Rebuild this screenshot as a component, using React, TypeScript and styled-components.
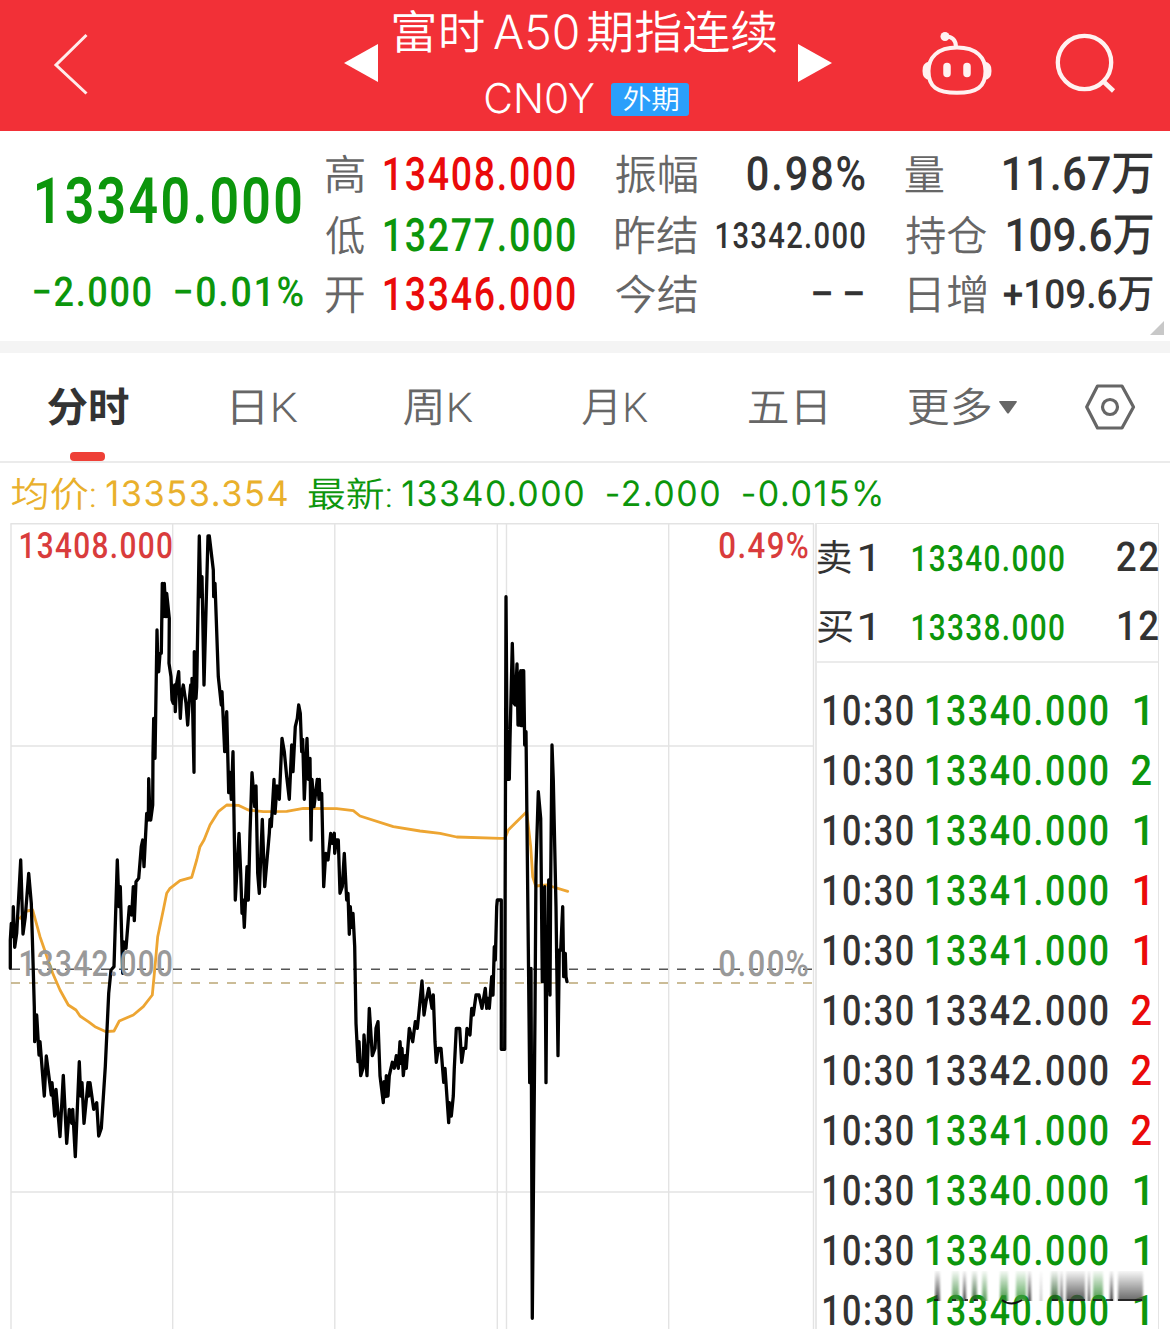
import React, { useLayoutEffect, useRef, useState } from "react";
import styled, { createGlobalStyle } from "styled-components";

const GREEN = "#0c960c";
const RED = "#ea0a0a";
const INK = "#333333";
const GREY = "#666666";
const NUMERIC = 'Roboto, "Noto Sans CJK SC", sans-serif';
const PLAIN = 'Inter, "Noto Sans CJK SC", sans-serif';

const GlobalStyle = createGlobalStyle`
  *, *::before, *::after { box-sizing: border-box; }
  body { margin: 0; background: #ffffff; }
`;

/* ---------- text fitted to a fixed width ---------- */

interface TextStyle {
  size: number;
  color?: string;
  weight?: number;
  plain?: boolean;
  drop?: number;
}

const FitBox = styled.span<{ $w: number; $size: number }>`
  display: block;
  flex: none;
  width: ${(p) => p.$w}px;
  height: ${(p) => p.$size}px;
`;

const FitText = styled.span<{ $size: number; $color: string; $weight: number; $plain: boolean; $track: number }>`
  display: inline-block;
  white-space: nowrap;
  transform-origin: 0 50%;
  text-rendering: geometricPrecision;
  font-family: ${(p) => (p.$plain ? PLAIN : NUMERIC)};
  font-size: ${(p) => p.$size}px;
  font-weight: ${(p) => p.$weight};
  letter-spacing: ${(p) => p.$track}px;
  line-height: ${(p) => p.$size}px;
  color: ${(p) => p.$color};
`;

function Fit({ w, size, color = INK, weight = 500, plain = false, drop = 0, children }: TextStyle & { w: number; children: string }) {
  const ref = useRef<HTMLSpanElement>(null);
  const [transform, setTransform] = useState("none");
  const track = /^[-−+\d.:%]+$/.test(children) ? size * 0.045 : 0;
  useLayoutEffect(() => {
    const ctx = document.createElement("canvas").getContext("2d");
    if (!ref.current || !ctx) return;
    const cs = getComputedStyle(ref.current);
    const zoom = 8;
    ctx.font = `${cs.fontWeight} ${size * zoom}px ${cs.fontFamily}`;
    const m = ctx.measureText(children);
    const left = m.actualBoundingBoxLeft / zoom;
    const ink = left + m.actualBoundingBoxRight / zoom + track * (children.length - 1);
    const k = w / ink;
    setTransform(`translate(${left * k + 0.8}px, ${drop}px) scaleX(${k})`);
  }, [w, size, weight, children, track, drop]);
  return (
    <FitBox $w={w} $size={size}>
      <FitText ref={ref} $size={size} $color={color} $weight={weight} $plain={plain} $track={track} style={{ transform }}>
        {children}
      </FitText>
    </FitBox>
  );
}

/* ---------- page ---------- */

const Page = styled.div`
  width: 1170px;
  height: 1329px;
  overflow: hidden;
  display: flex;
  flex-direction: column;
  background: #ffffff;
`;

const Header = styled.header`
  flex: none;
  height: 131px;
  display: grid;
  grid-template-columns: 344px 34px 420px 34px 89px 71px 178px;
  align-items: start;
  background: #f23037;
`;

const IconSlot = styled.div<{ $top: number; $left?: number }>`
  padding-top: ${(p) => p.$top}px;
  padding-left: ${(p) => p.$left ?? 0}px;
  svg { display: block; }
`;

const Titles = styled.div`
  display: flex;
  flex-direction: column;
  padding: 10px 0 0 15px;
`;

const TitleLine = styled.div`
  display: flex;
  align-items: center;
  gap: 10px;
  height: 47px;
`;

const CodeLine = styled.div`
  display: flex;
  align-items: center;
  gap: 18px;
  height: 34px;
  margin: 25px 0 0 92px;
`;

const Tag = styled.span`
  display: flex;
  align-items: center;
  justify-content: center;
  width: 78px;
  height: 33px;
  border-radius: 3px;
  background: #2b9ffb;
`;

const Quote = styled.section`
  flex: none;
  position: relative;
  height: 210px;
  display: grid;
  grid-template-columns: 325px 290px 290px 265px;
`;

const Headline = styled.div`
  padding: 39px 0 0 36px;
`;

const ChangeRow = styled.div`
  display: flex;
  gap: 24px;
  margin: 39px 0 0 -3px;
`;

const StatColumn = styled.div`
  display: grid;
  grid-template-rows: 61px 61px 58px;
  padding-top: 13px;
`;

const Stat = styled.div<{ $width: number; $indent?: number }>`
  display: flex;
  align-items: center;
  justify-content: space-between;
  width: ${(p) => p.$width}px;
  padding-left: ${(p) => p.$indent ?? 0}px;
`;

const Corner = styled.svg`
  position: absolute;
  right: 6px;
  bottom: 6px;
`;

const Band = styled.div`
  flex: none;
  height: 12px;
  background: #f4f4f4;
`;

const Tabs = styled.nav`
  flex: none;
  height: 110px;
  display: grid;
  grid-template-columns: 185px 171px 178px 167px 160px 177px 85px;
  padding-left: 47px;
  border-bottom: 2px solid #ebebeb;
`;

const Tab = styled.div`
  position: relative;
  display: flex;
  align-items: center;
  gap: 9px;
`;

const ActiveMark = styled.span`
  position: absolute;
  left: 23px;
  bottom: 0;
  width: 35px;
  height: 9px;
  border-radius: 4px;
  background: #ee4037;
`;

const Summary = styled.div`
  flex: none;
  height: 60px;
  display: flex;
  align-items: center;
  gap: 11px;
  padding: 2px 0 0 11px;
`;

const SummaryGroup = styled.div<{ $before?: number }>`
  display: flex;
  align-items: center;
  gap: 12px;
  margin-left: ${(p) => p.$before ?? 0}px;
`;

const Body = styled.main`
  flex: none;
  height: 806px;
  display: grid;
  grid-template-columns: 815px 344px;
`;

const ChartArea = styled.div`
  position: relative;
  svg { display: block; }
`;

const ChartLabel = styled.div<{ $x: number; $y: number }>`
  position: absolute;
  left: ${(p) => p.$x}px;
  top: ${(p) => p.$y}px;
`;

const Book = styled.aside`
  position: relative;
  border: 1px solid #e4e4e4;
  border-bottom: 0;
  border-left: 2px solid #e8e8e8;
  height: 806px;
`;

const Orders = styled.div`
  height: 139px;
  border-bottom: 2px solid #ebebeb;
`;

const Order = styled.div`
  display: grid;
  grid-template-columns: 42px 53px 1fr auto;
  align-items: center;
  height: 69px;
  padding-right: 1px;
`;

const Ticks = styled.div`
  padding-top: 19px;
`;

const Tick = styled.div<{ $end: number }>`
  height: 60px;
  display: grid;
  grid-template-columns: 103px 1fr auto;
  align-items: center;
  padding: 0 ${(p) => p.$end}px 0 6px;
`;

const Smear = styled.svg`
  position: absolute;
  left: 117px;
  top: 747px;
`;

/* ---------- chart data ---------- */

type Section = [number, number, number[]];

const price: Section[] = [
  [0, 840, [31,385,31,300,34,250,38,290,40,200,44,322,50,280,62,60,69,282,76,230,86,100,94,190,98,330,103,500,104,605,110,525,117,645,120,605,133,768,139,648,154,765,156,728,164,828,168,748,180,890,190,706,200,910,208,808,215,850,218,808,226,950,238,665,242,768,246,728,252,850,264,728,266,768,270,728,281,808,290,788,296,888,304,865,316,680,326,460,333,390,342,380,352,60,357,200,361,140,368,400,370,305,378,325,388,200,395,225,400,140,403,242,408,125,416,115,424,20]],
  [0, 520, [428,960,432,1040,440,880,445,900,446,776,450,895,452,900,458,855,459,700,461,595,465,715,471,330,474,450,476,455,480,400,484,400,487,190,490,290,493,190,498,290,500,220,508,295,507,430,513,470,516,540,520,550,524,495,526,575,530,490,536,455,541,595,545,520,550,495,558,550,563,615,568,540,572,495,576,540,576,475,582,757,583,395,588,535,590,500,598,48,602,230,606,170,612,495,624,48,628,48,640,150,641,230,645,190,655,470,664,555,666,515,674,695,680,575,686,818,690,757,694,838,699,695]],
  [220, 680, [46,660,57,460,62,580,66,700,69,660,73,742,81,560,85,660,90,460,96,278,104,380,108,318,113,580,118,640,127,418,134,620,148,460,150,418,154,440,162,298,165,400,171,318,178,358,186,175,193,215,200,290,208,358,215,195,219,275,226,140,232,115,236,75,241,100,245,215,248,178,253,358,261,175,265,298,270,235,273,480,276,298,282,380,292,298,297,358,298,298,299,340,305,340,311,620,317,520,324,540,332,460,336,490,343,460,344,520,349,480,355,480,360,640,367,620,373,520,380,660,384,640,388,763,391,680,395,742,399,700,404,800,408,1030,414,1145,417,1085,422,1187,429,1165,432,1065,441,1187,448,985,457,1127,465,1105,468,1045,474,1025,480,1187,490,1268,492,1205,497,1250,499,1187,504,1248,508,1187,517,1147,523,1165,529,1127,535,1165,540,1085,544,1150,546,1105,550,1187,556,1127,559,1165,568,1045,578,1085,586,1025,592,1045,596,1005,606,903,612,1005,618,965,626,925,636,985,640,945,645,1085,649,1147,655,1105,663,1105,671,1207,675,1165,686,1328,688,1268,694,1308,700,1248,703,1165,709,1045,719,1045,725,1147,731,1105,737,1105,741,1045,750,1065,755,985,760,1005,768,945,777,945,786,985,796,925,800,985,804,955,808,985,815,890,819,945,823,800,826,840,830,680]],
  [480, 580, [52,960,64,960,64,1408,74,1408,78,50,82,598,88,598,90,480,97,190,102,370,106,375,111,252,114,435,117,280,119,435,122,272,124,437,127,272,129,437,131,272,134,495,138,455,145,1100,149,1508,153,1165,157,2215,165,1300,168,860,175,635,182,715,187,1205,189,930,191,1205,194,920,198,1508,201,1040,203,1230,206,900,210,1245,212,900,216,495,220,600,228,980,234,1427,238,1110,242,1110,248,980,251,1190,256,1120,258,1190,261,1205]],
];

const average: Section[] = [
  [0, 840, [60,235,80,213,98,210,120,290,158,400,180,450,205,495,228,510,240,528,265,545,285,560,318,575,342,573,358,543,400,525,430,500,457,465,465,380,473,290,490,210,500,160,510,145,540,122,575,112,590,60,600,20]],
  [0, 520, [612,960,630,915,655,875,680,855,715,856,745,870]],
  [220, 680, [130,395,200,394,250,385,350,386,400,392,420,408,520,440,600,453,660,460,710,471,840,475]],
  [480, 580, [75,775,85,750,140,695,152,800,158,890,167,918,200,915,263,934]],
];

/* Each section stores thirds of a pixel from its own origin. */
const toPoints = (sections: Section[]) =>
  sections
    .flatMap(([ox, oy, v]) => {
      const out: string[] = [];
      for (let i = 0; i < v.length; i += 2) out.push(`${(ox + v[i] / 3).toFixed(1)},${(oy + v[i + 1] / 3).toFixed(1)}`);
      return out;
    })
    .join(" ");

function Chart() {
  return (
    <ChartArea>
      <svg width="815" height="806" viewBox="0 523 815 806">
        <g stroke="#e3e3e3" strokeWidth="1.4" fill="none">
          <path d="M10.500 523.700H814M11 746H814M11 1192H814" />
          <path d="M11 523.500V1329M172.700 523.500V1329M334.800 523.500V1329M497.300 523.500V1329M506.500 523.500V1329M668.700 523.500V1329M813.500 523.500V1329" />
        </g>
        <path d="M11 969.200H812" stroke="#555" strokeWidth="1.400" strokeDasharray="9 9" />
        <path d="M11 983H812" stroke="#bba775" strokeWidth="1.400" strokeDasharray="9 9" />
        <polyline points={toPoints(average)} fill="none" stroke="#eda532" strokeWidth="2.8" strokeLinejoin="round" strokeLinecap="round" />
        <polyline points={toPoints(price)} fill="none" stroke="#000" strokeWidth="3.3" strokeLinejoin="round" strokeLinecap="round" />
      </svg>
      <ChartLabel $x={20} $y={5}><Fit w={151} size={36} color="#d93c3c">13408.000</Fit></ChartLabel>
      <ChartLabel $x={719} $y={5}><Fit w={88} size={36} color="#d93c3c">0.49%</Fit></ChartLabel>
      <ChartLabel $x={20} $y={423}><Fit w={151} size={36} color="#999999">13342.000</Fit></ChartLabel>
      <ChartLabel $x={719} $y={423}><Fit w={88} size={36} color="#999999">0.00%</Fit></ChartLabel>
    </ChartArea>
  );
}

const ticks: [string, string, string][] = [
  ["13340.000", GREEN, "1"], ["13340.000", GREEN, "2"], ["13340.000", GREEN, "1"],
  ["13341.000", GREEN, "-1"], ["13341.000", GREEN, "-1"], ["13342.000", INK, "-2"],
  ["13342.000", INK, "-2"], ["13341.000", GREEN, "-2"], ["13340.000", GREEN, "1"],
  ["13340.000", GREEN, "1"], ["13340.000", GREEN, "1"],
];

const bars: [number, number, string][] = [
  [1, 5, "#333"], [18, 7, "#3b8a3b"], [29, 3, "#222"], [38, 5, "#2e5c2e"], [48, 5, "#4c934c"],
  [66, 8, "#2d8a2d"], [82, 10, "#3f9a3f"], [94, 3, "#222"], [106, 2, "#bbb"], [117, 7, "#225522"],
  [126, 3, "#555"], [132, 19, "#444"], [154, 2, "#222"], [159, 10, "#338a33"], [176, 3, "#222"], [184, 25, "#555"],
];

function TabItem({ w, active, children }: { w: number; active?: boolean; children: string }) {
  return (
    <Tab>
      <Fit w={w} size={41} color={active ? INK : GREY} weight={active ? 700 : 350} drop={2}>{children}</Fit>
      {active && <ActiveMark />}
      {children === "更多" && <svg width="18" height="13" viewBox="0 0 18 13"><path d="M1 0H17Q18.500 0 17.500 1.500L10 12Q9 13 8 12L.500 1.500Q-.500 0 1 0Z" fill="#666" /></svg>}
    </Tab>
  );
}

function Label({ w, children }: { w: number; children: string }) {
  return <Fit w={w} size={42} color="#666666" weight={350} drop={2}>{children}</Fit>;
}

export default function App() {
  return (
    <Page>
      <GlobalStyle />
      <Header>
        <IconSlot $top={32} $left={52}>
          <svg width="38" height="64" viewBox="52 32 38 64"><path d="M86.500 35L56 65L86.500 93.500" fill="none" stroke="#ffeceb" strokeWidth="3" /></svg>
        </IconSlot>
        <IconSlot $top={44}>
          <svg width="34" height="38" viewBox="0 0 34 38"><path d="M0 19L34 0V38Z" fill="#fff" /></svg>
        </IconSlot>
        <Titles>
          <TitleLine>
            <Fit w={90} size={46} color="#fff" weight={350}>富时</Fit>
            <Fit w={84} size={47} color="#fff" weight={300} plain drop={-1}>A50</Fit>
            <Fit w={189} size={46} color="#fff" weight={350}>期指连续</Fit>
          </TitleLine>
          <CodeLine>
            <Fit w={108} size={41} color="#fff" weight={300} plain drop={-1}>CN0Y</Fit>
            <Tag><Fit w={54} size={27} color="#fff" weight={350} drop={1}>外期</Fit></Tag>
          </CodeLine>
        </Titles>
        <IconSlot $top={44}>
          <svg width="34" height="38" viewBox="0 0 34 38"><path d="M0 0L34 19L0 38Z" fill="#fff" /></svg>
        </IconSlot>
        <span />
        <IconSlot $top={30}>
          <svg width="72" height="68" viewBox="921 30 72 68">
            <g fill="none" stroke="#fff2f1" strokeWidth="4">
              <path d="M957 47.500C937 47.500 928.500 58 928.500 71C928.500 87 937 92.800 957 92.800C977 92.800 985.500 87 985.500 71C985.500 58 977 47.500 957 47.500Z" />
              <path d="M945 36.500C952 36 956 40 956 47" />
            </g>
            <circle cx="945" cy="36.500" r="4.500" fill="#fff2f1" />
            <path d="M929 61.500Q922 63 922.500 71Q922.500 79 929 80ZM985 61.500Q992 63 991.500 71Q991.500 79 985 80Z" fill="#fff2f1" />
            <path d="M947 66.500V73.500M967 66.500V73.500" stroke="#fff2f1" strokeWidth="7.500" strokeLinecap="round" />
          </svg>
        </IconSlot>
        <IconSlot $top={31} $left={61}>
          <svg width="64" height="66" viewBox="1053 31 64 66">
            <circle cx="1084.500" cy="62.500" r="26.700" fill="none" stroke="#fff2f1" strokeWidth="4.300" />
            <path d="M1103.500 81.500L1113.500 91" stroke="#fff2f1" strokeWidth="4.500" />
          </svg>
        </IconSlot>
      </Header>

      <Quote>
        <Headline>
          <Fit w={264} size={64} color={GREEN} weight={600}>13340.000</Fit>
          <ChangeRow>
            <Fit w={117} size={41} color={GREEN}>−2.000</Fit>
            <Fit w={128} size={41} color={GREEN}>−0.01%</Fit>
          </ChangeRow>
        </Headline>
        <StatColumn>
          <Stat $width={249}><Label w={38}>高</Label><Fit w={190} size={46} color={RED}>13408.000</Fit></Stat>
          <Stat $width={249}><Label w={38}>低</Label><Fit w={190} size={46} color={GREEN}>13277.000</Fit></Stat>
          <Stat $width={249}><Label w={38}>开</Label><Fit w={190} size={46} color={RED}>13346.000</Fit></Stat>
        </StatColumn>
        <StatColumn>
          <Stat $width={249}><Label w={81}>振幅</Label><Fit w={117} size={47}>0.98%</Fit></Stat>
          <Stat $width={249}><Label w={81}>昨结</Label><Fit w={148} size={36}>13342.000</Fit></Stat>
          <Stat $width={247}><Label w={81}>今结</Label><Fit w={50} size={42}>– –</Fit></Stat>
        </StatColumn>
        <StatColumn>
          <Stat $width={247}><Label w={38}>量</Label><Fit w={149} size={47}>11.67万</Fit></Stat>
          <Stat $width={247}><Label w={81}>持仓</Label><Fit w={145} size={46}>109.6万</Fit></Stat>
          <Stat $width={247} $indent={4}><Label w={76}>日增</Label><Fit w={149} size={40}>+109.6万</Fit></Stat>
        </StatColumn>
        <Corner width="14" height="14" viewBox="0 0 14 14"><path d="M14 0V14H0Z" fill="#c8c8c8" /></Corner>
      </Quote>
      <Band />

      <Tabs>
        <TabItem w={81} active>分时</TabItem>
        <TabItem w={65}>日K</TabItem>
        <TabItem w={69}>周K</TabItem>
        <TabItem w={66}>月K</TabItem>
        <TabItem w={76}>五日</TabItem>
        <TabItem w={82}>更多</TabItem>
        <Tab>
          <svg width="51" height="46" viewBox="0 0 51 46" fill="none" stroke="#666" strokeWidth="3.200" strokeLinejoin="round">
            <path d="M12.500 2H37L48.500 23L37 44H12.500L1.700 23Z" />
            <circle cx="25" cy="23" r="7.500" />
          </svg>
        </Tab>
      </Tabs>

      <Summary>
        <SummaryGroup>
          <Fit w={83} size={35} color="#e9b02c" weight={350} drop={1}>均价:</Fit>
          <Fit w={180} size={35} color="#e9b02c" weight={400} plain>13353.354</Fit>
        </SummaryGroup>
        <SummaryGroup $before={11}>
          <Fit w={82} size={35} color={GREEN} weight={350} drop={1}>最新:</Fit>
          <Fit w={180} size={35} color={GREEN} weight={400} plain>13340.000</Fit>
        </SummaryGroup>
        <SummaryGroup $before={13}><Fit w={112} size={35} color={GREEN} weight={400} plain>-2.000</Fit></SummaryGroup>
        <SummaryGroup $before={13}><Fit w={138} size={35} color={GREEN} weight={400} plain>-0.015%</Fit></SummaryGroup>
      </Summary>

      <Body>
        <Chart />
        <Book>
          <Orders>
            <Order><Fit w={33} size={37} weight={400} drop={1}>卖</Fit><Fit w={13} size={38} weight={400}>1</Fit><Fit w={151} size={36} color={GREEN}>13340.000</Fit><Fit w={41} size={41}>22</Fit></Order>
            <Order><Fit w={34} size={37} weight={400} drop={1}>买</Fit><Fit w={13} size={38} weight={400}>1</Fit><Fit w={151} size={36} color={GREEN}>13338.000</Fit><Fit w={39} size={41}>12</Fit></Order>
          </Orders>
          <Ticks>
            {ticks.map(([value, color, volume], i) => {
              const sold = volume.startsWith("-");
              const amount = volume.replace("-", "");
              const one = amount === "1";
              return (
                <Tick key={i} $end={one ? 11 : 8}>
                  <Fit w={89} size={42}>10:30</Fit>
                  <Fit w={181} size={42} color={color}>{value}</Fit>
                  <Fit w={one ? 13 : 19} size={42} color={sold ? RED : GREEN}>{amount}</Fit>
                </Tick>
              );
            })}
          </Ticks>
          <Smear width="212" height="40" viewBox="0 0 212 40">
            <defs>
              <linearGradient id="fade" x1="0" y1="0" x2="0" y2="1">
                <stop offset="0" stopColor="#fff" stopOpacity="0.05" />
                <stop offset="1" stopColor="#fff" stopOpacity="0.9" />
              </linearGradient>
              <filter id="soft" x="-5%" y="-5%" width="110%" height="110%"><feGaussianBlur stdDeviation="1 0" /></filter>
              <mask id="fadeMask" maskUnits="userSpaceOnUse" x="0" y="0" width="212" height="40"><rect width="212" height="30" fill="url(#fade)" /></mask>
            </defs>
            <g mask="url(#fadeMask)">
              <g filter="url(#soft)">
                {bars.map(([x, w, fill]) => <rect key={x} x={x} y="0" width={w} height="30" fill={fill} />)}
              </g>
            </g>
            <path d="M68 29Q77 36 88 29" fill="none" stroke="#111" strokeWidth="2" />
            <path d="M0 29H4M18 29H22M31 29H34M40 29H44M118 29H124M133 29H151M159 29H168M172 29H179M184 29H208" stroke="#111" strokeWidth="1.500" />
          </Smear>
        </Book>
      </Body>
    </Page>
  );
}
